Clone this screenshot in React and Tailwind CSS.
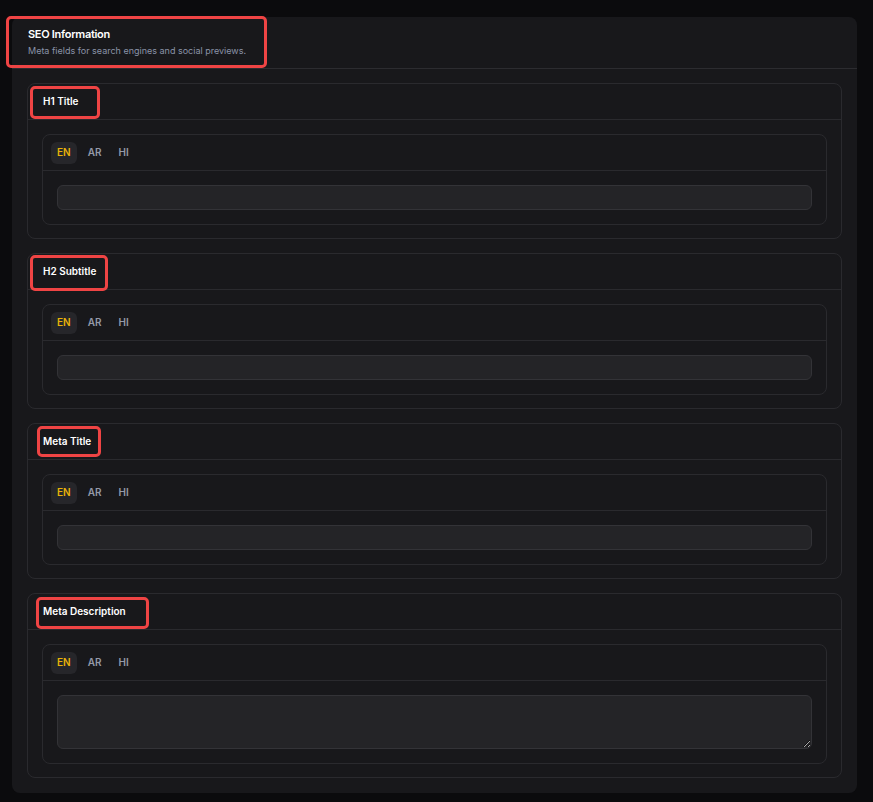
import React from 'react'

const sections = [
  { title: 'H1 Title', multiline: false },
  { title: 'H2 Subtitle', multiline: false },
  { title: 'Meta Title', multiline: false },
  { title: 'Meta Description', multiline: true },
]

// red annotation boxes drawn over the screenshot
const marks = [
  'left-[6px] top-[16px] w-[261px] h-[52px]',
  'left-[30px] top-[86px] w-[70px] h-[33px]',
  'left-[30px] top-[255px] w-[78px] h-[36px]',
  'left-[37px] top-[426px] w-[64px] h-[31px]',
  'left-[36px] top-[597px] w-[113px] h-[32px]',
]

function LangField({ multiline }) {
  return (
    <div className="rounded-lg border border-[#2a2a2e]">
      <div className="h-[36px] flex items-center gap-[5px] px-[8px] border-b border-[#2a2a2e]">
        <button className="h-[22px] px-[6px] rounded-md bg-[#26262a] text-[10px] font-semibold text-[#eab308]">EN</button>
        <button className="h-[22px] px-[6px] rounded-md text-[10px] font-semibold text-[#9499a8]">AR</button>
        <button className="h-[22px] px-[6px] rounded-md text-[10px] font-semibold text-[#9499a8]">HI</button>
      </div>
      <div className="p-[14px]">
        {multiline ? (
          <textarea className="block w-full h-[54px] rounded-md border border-[#333337] bg-[#242427] outline-none scheme-dark [color-scheme:dark]" />
        ) : (
          <input className="block w-full h-[25px] rounded-md border border-[#333337] bg-[#242427] outline-none" />
        )}
      </div>
    </div>
  )
}

export default function App() {
  return (
    <div className="relative min-h-screen bg-[#0b0b0d] pt-[17px] pb-[9px] font-['Inter',sans-serif] text-white scheme-dark">
      <div className="ml-[12px] w-[845px] rounded-lg bg-[#18181b]">
        <div className="h-[52px] flex flex-col justify-center px-4 pb-[1px] border-b border-[#2c2c30]">
          <h2 className="text-[11px] font-semibold leading-4 tracking-[-0.3px]">SEO Information</h2>
          <p className="text-[9px] leading-4 text-[#8a93a8] mt-[1px]">Meta fields for search engines and social previews.</p>
        </div>
        <div className="flex flex-col gap-[14px] px-[15px] pt-[14px] pb-[15px]">
          {sections.map((s) => (
            <div key={s.title} className="rounded-lg border border-[#2a2a2e]">
              <div className="h-[36px] flex items-center px-[15px] border-b border-[#2a2a2e]">
                <h3 className="text-[10px] font-semibold">{s.title}</h3>
              </div>
              <div className="px-[14px] pt-[14px] pb-[13px]">
                <LangField multiline={s.multiline} />
              </div>
            </div>
          ))}
        </div>
      </div>

      {marks.map((m) => (
        <div key={m} className={`absolute rounded-[5px] border-[3px] border-[#ef4444] pointer-events-none ${m}`} />
      ))}
    </div>
  )
}
